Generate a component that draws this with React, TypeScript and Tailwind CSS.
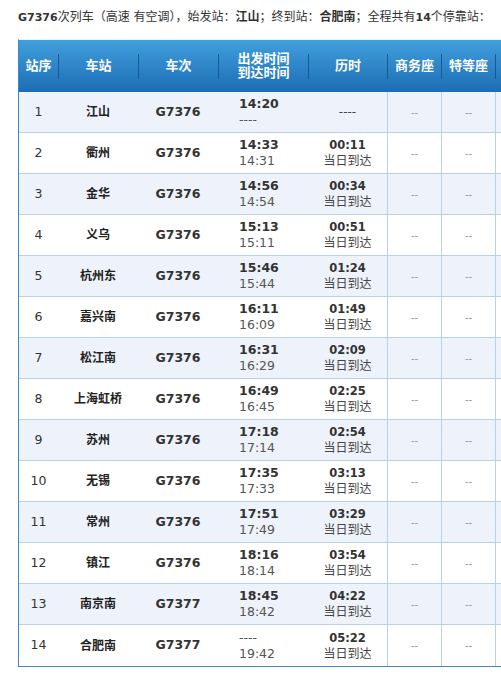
const rows = [
  { no: 1, station: "江山", train: "G7376", dep: "14:20", arr: "----", dur: "----", day: "" },
  { no: 2, station: "衢州", train: "G7376", dep: "14:33", arr: "14:31", dur: "00:11", day: "当日到达" },
  { no: 3, station: "金华", train: "G7376", dep: "14:56", arr: "14:54", dur: "00:34", day: "当日到达" },
  { no: 4, station: "义乌", train: "G7376", dep: "15:13", arr: "15:11", dur: "00:51", day: "当日到达" },
  { no: 5, station: "杭州东", train: "G7376", dep: "15:46", arr: "15:44", dur: "01:24", day: "当日到达" },
  { no: 6, station: "嘉兴南", train: "G7376", dep: "16:11", arr: "16:09", dur: "01:49", day: "当日到达" },
  { no: 7, station: "松江南", train: "G7376", dep: "16:31", arr: "16:29", dur: "02:09", day: "当日到达" },
  { no: 8, station: "上海虹桥", train: "G7376", dep: "16:49", arr: "16:45", dur: "02:25", day: "当日到达" },
  { no: 9, station: "苏州", train: "G7376", dep: "17:18", arr: "17:14", dur: "02:54", day: "当日到达" },
  { no: 10, station: "无锡", train: "G7376", dep: "17:35", arr: "17:33", dur: "03:13", day: "当日到达" },
  { no: 11, station: "常州", train: "G7376", dep: "17:51", arr: "17:49", dur: "03:29", day: "当日到达" },
  { no: 12, station: "镇江", train: "G7376", dep: "18:16", arr: "18:14", dur: "03:54", day: "当日到达" },
  { no: 13, station: "南京南", train: "G7377", dep: "18:45", arr: "18:42", dur: "04:22", day: "当日到达" },
  { no: 14, station: "合肥南", train: "G7377", dep: "----", arr: "19:42", dur: "05:22", day: "当日到达" },
];

const cols = "grid grid-cols-[39px_80px_80px_90px_79px_54px_54px_60px]";
const font = "font-['DejaVu_Sans','Noto_Sans_CJK_SC',sans-serif]";

const HeadCell = ({ first, children }: { first?: boolean; children?: React.ReactNode }) => (
  <div className="flex items-center">
    <div
      className={`flex h-[25px] w-full items-center justify-center text-center text-[13px] font-bold leading-[14px] text-white ${
        first ? "" : "border-l border-[#1a5894]"
      }`}
    >
      {children}
    </div>
  </div>
);

export default function App() {
  return (
    <div className={`h-[675px] w-[501px] overflow-hidden bg-white text-[#333] ${font}`}>
      <div className="h-[39px] whitespace-nowrap pl-[18px] pt-[9px] text-[12px] leading-[16px] text-[#333]">
        <b className="text-[11px]">G7376</b>次列车（高速 有空调），始发站：<b>江山</b>；终到站：<b>合肥南</b>；全程共有
        <b className="text-[11px]">14</b>个停靠站：
      </div>
      <div className="ml-[18px] w-[538px] border-t border-[#e4f2f9] border-l border-b border-l-[#3b88c4] border-b-[#3b88c4]">
        <div className={`${cols} h-[52px] bg-gradient-to-b from-[#419fdd] to-[#1c6db4]`}>
          <HeadCell first>站序</HeadCell>
          <HeadCell>车站</HeadCell>
          <HeadCell>车次</HeadCell>
          <HeadCell>
            <span className="block leading-[14px]">
              出发时间
              <br />
              到达时间
            </span>
          </HeadCell>
          <HeadCell>历时</HeadCell>
          <HeadCell>商务座</HeadCell>
          <HeadCell>特等座</HeadCell>
          <HeadCell />
        </div>
        {rows.map((r, i) => (
          <div
            key={r.no}
            className={`${cols} h-[41px] ${i < rows.length - 1 ? "border-b border-[#b9d1e4]" : ""} ${
              i % 2 === 0 ? "bg-[#eef2fa]" : "bg-white"
            }`}
          >
            <div className="flex items-center justify-center text-[12.5px]">{r.no}</div>
            <div className="flex items-center justify-center text-[12px] font-bold text-[#222]">{r.station}</div>
            <div className="flex items-center justify-center text-[12.5px] font-bold text-[#333]">{r.train}</div>
            <div className="flex flex-col justify-center pl-[21px] leading-[16px]">
              <span className={`text-[12.5px] ${r.dep === "----" ? "text-[#555]" : "font-bold text-[#333]"}`}>{r.dep}</span>
              <span className="text-[12.5px] text-[#555]">{r.arr}</span>
            </div>
            <div className="flex flex-col items-center justify-center leading-[16px]">
              {r.day ? (
                <>
                  <span className="text-[11.5px] font-bold text-[#333]">{r.dur}</span>
                  <span className="text-[12px] text-[#444]">{r.day}</span>
                </>
              ) : (
                <span className="text-[12px] text-[#444]">{r.dur}</span>
              )}
            </div>
            <div className="flex items-center justify-center border-l border-[#b9d1e4] text-[10px] text-[#999]">--</div>
            <div className="flex items-center justify-center border-l border-[#b9d1e4] text-[10px] text-[#999]">--</div>
            <div className="border-l border-[#b9d1e4]" />
          </div>
        ))}
      </div>
    </div>
  );
}
